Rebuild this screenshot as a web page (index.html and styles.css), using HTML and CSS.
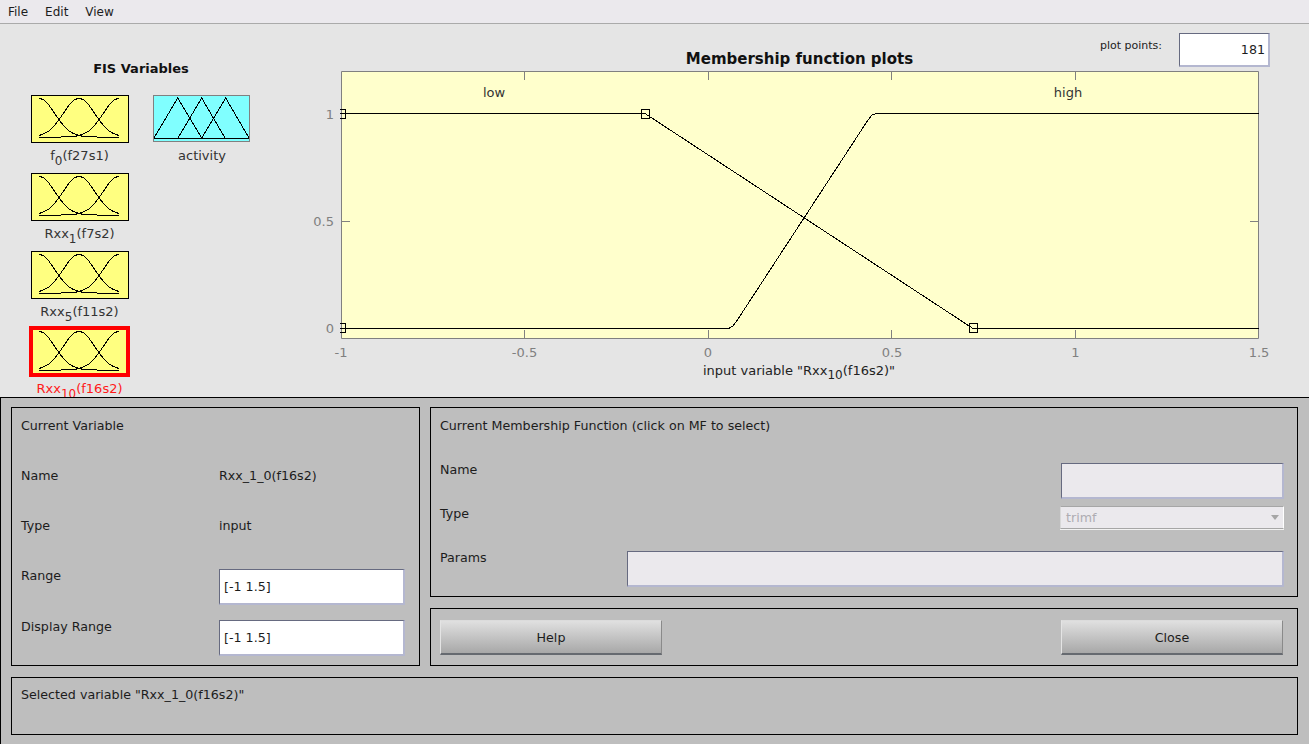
FILE: index.html
```html
<!DOCTYPE html>
<html lang="en">
<head>
    <meta charset="UTF-8">
    <meta name="viewport" content="width=device-width, initial-scale=1.0">
    <title>Membership Function Editor</title>
    <link rel="stylesheet" href="styles.css">
</head>
<body>
    <svg class="defs" width="0" height="0" aria-hidden="true">
        <symbol id="gauss3" viewBox="0 0 98 48" overflow="visible">
            <path d="M8 3L13 5L18 10.2L23 17.4L28 24.8L33 31.2L38 35.9L43 38.8L48 40.5L53 41.5H65L67 42.5H88"/>
            <path d="M8 40.5L13 38.8L18 35.9L23 31.2L28 24.8L33 17.4L38 10.2L43 5L48 3L53 5L58 10.2L63 17.4L68 24.8L73 31.2L78 35.9L83 38.8L88 40.5"/>
            <path d="M8 42.5H29L31 41.5H43L48 40.5L53 38.8L58 35.9L63 31.2L68 24.8L73 17.4L78 10.2L83 5L88 3"/>
        </symbol>
    </svg>

    <nav class="menubar">
        <span class="menu-item">File</span>
        <span class="menu-item">Edit</span>
        <span class="menu-item">View</span>
    </nav>

    <section class="top">
        <aside class="fis">
            <h2 class="fis-title">FIS Variables</h2>
            <div class="fis-grid">
                <div class="fis-var">
                    <svg class="thumb" viewBox="1 1 96 46"><use href="#gauss3" width="98" height="48"/></svg>
                    <span class="fis-label">f<sub>0</sub>(f27s1)</span>
                </div>
                <div class="fis-var">
                    <svg class="thumb thumb-output" viewBox="1 1 95 45">
                        <path d="M1 43L24.7 3L48.7 43M25 43L48.7 3L72 43M48.7 43L72.7 3L96 43M0 43H97"/>
                    </svg>
                    <span class="fis-label label-output">activity</span>
                </div>
                <div class="fis-var">
                    <svg class="thumb" viewBox="1 1 96 46"><use href="#gauss3" width="98" height="48"/></svg>
                    <span class="fis-label">Rxx<sub>1</sub>(f7s2)</span>
                </div>
                <div></div>
                <div class="fis-var">
                    <svg class="thumb" viewBox="1 1 96 46"><use href="#gauss3" width="98" height="48"/></svg>
                    <span class="fis-label">Rxx<sub>5</sub>(f11s2)</span>
                </div>
                <div></div>
                <div class="fis-var selected">
                    <svg class="thumb" viewBox="2 2 93 43"><use href="#gauss3" width="98" height="48"/></svg>
                    <span class="fis-label">Rxx<sub>10</sub>(f16s2)</span>
                </div>
            </div>
        </aside>

        <div class="plot-area">
            <header class="plot-head">
                <h1 class="plot-title">Membership function plots</h1>
                <div class="plot-points">
                    <label class="plot-points-label" for="points">plot points:</label>
                    <input class="field points-input" id="points" type="text" value="181">
                </div>
            </header>
            <svg class="plot" width="1009" height="325" viewBox="300 71 1009 325">
                <rect class="axes-bg" x="341.5" y="71.5" width="917" height="267"/>
                <path class="axes" d="M341.5 71.5H1258.5V338.5H341.5Z"/>
                <path class="axes" d="M524.5 72V80M708.5 72V80M891.5 72V80M1075.5 72V80M524.5 338V330M708.5 338V330M891.5 338V330M1075.5 338V330M342 113.5H350M342 221.5H350M342 328.5H350M1258 113.5H1250M1258 221.5H1250M1258 328.5H1250"/>

                <path class="curve" d="M340 113.5H645L973 328.5H1258.5"/>
                <path class="curve" d="M340 328.5H728.5L733 326L738 319L868 120L872 115L876 113.5H1258.5"/>
                <path class="curve" d="M340 109.5H345.5V118.5H340M340 323.5H345.5V332.5H340"/>
                <rect class="curve" x="641.5" y="109.5" width="8" height="9"/>
                <rect class="curve" x="969.5" y="323.5" width="8" height="9"/>

                <text class="mf-name" x="494" y="97">low</text>
                <text class="mf-name" x="1068" y="97">high</text>

                <text class="tick tick-y" x="334" y="119">1</text>
                <text class="tick tick-y" x="334" y="226">0.5</text>
                <text class="tick tick-y" x="334" y="333">0</text>
                <text class="tick" x="341" y="357">-1</text>
                <text class="tick" x="524.5" y="357">-0.5</text>
                <text class="tick" x="708" y="357">0</text>
                <text class="tick" x="892" y="357">0.5</text>
                <text class="tick" x="1075.5" y="357">1</text>
                <text class="tick" x="1259" y="357">1.5</text>
                <text class="x-label" x="799" y="375">input variable "Rxx<tspan class="x-sub" dy="4">10</tspan><tspan dy="-4">(f16s2)"</tspan></text>
            </svg>
        </div>
    </section>

    <section class="bottom">
        <div class="panel current-var">
            <div class="panel-title var-title">Current Variable</div>
            <div>Name</div>
            <div>Rxx_1_0(f16s2)</div>
            <div>Type</div>
            <div>input</div>
            <div>Range</div>
            <input class="field var-input" type="text" value="[-1 1.5]">
            <div>Display Range</div>
            <input class="field var-input" type="text" value="[-1 1.5]">
        </div>

        <div class="right-col">
            <div class="panel current-mf">
                <div class="panel-title mf-title">Current Membership Function (click on MF to select)</div>
                <div class="mf-row">
                    <span>Name</span>
                    <input class="field field-off mf-name-input" type="text">
                </div>
                <div class="mf-row">
                    <span>Type</span>
                    <div class="dropdown">trimf<span class="dropdown-arrow"></span></div>
                </div>
                <div class="mf-row">
                    <span>Params</span>
                    <input class="field field-off mf-params-input" type="text">
                </div>
            </div>
            <div class="panel button-bar">
                <button class="btn">Help</button>
                <button class="btn">Close</button>
            </div>
        </div>

        <div class="panel status">Selected variable "Rxx_1_0(f16s2)"</div>
    </section>
</body>
</html>
```

FILE: styles.css
```css
* {
    box-sizing: border-box;
}
html, body {
    margin: 0;
    height: 744px;
    overflow: hidden;
}
body {
    font-family: "DejaVu Sans", sans-serif;
    font-size: 12.67px;
    line-height: 16px;
    color: #1c1c1c;
    background-color: #e5e5e5;
}
.defs {
    position: absolute;
}

/* menu */
.menubar {
    display: flex;
    height: 24px;
    padding: 4px 0 0 8px;
    gap: 17px;
    font-size: 12px;
    background-color: #ebe9ed;
    border-bottom: 1px solid #aaa;
}

/* top half */
.top {
    display: flex;
    height: 373px;
    overflow: hidden;
}
.fis {
    width: 300px;
    padding: 36px 0 0 31px;
}
.fis-title {
    margin: 0 0 17px;
    width: 220px;
    font-size: 13px;
    line-height: 18px;
    text-align: center;
    color: #111;
}
.fis-grid {
    display: grid;
    grid-template-columns: 98px 98px;
    grid-auto-rows: 78px;
    column-gap: 24px;
}
.fis-var {
    display: flex;
    flex-direction: column;
    align-items: center;
    color: #333;
}
.fis-label {
    margin: 5px 0 0 -1px;
    font-size: 13px;
    white-space: nowrap;
}
.label-output {
    margin: 6px 0 0;
}
.fis-label sub {
    font-size: 12px;
    line-height: 0;
    vertical-align: -5px;
}
.thumb {
    display: block;
    flex: none;
    width: 98px;
    height: 48px;
    border: 1px solid #000;
    background-color: #ffff80;
}
.thumb path, .thumb use {
    fill: none;
    stroke: #000;
    stroke-width: 1;
    shape-rendering: crispEdges;
}
.thumb-output {
    align-self: flex-start;
    width: 97px;
    height: 47px;
    border-color: #808080;
    background-color: #80ffff;
}
.selected {
    color: #ff1a1a;
}
.selected .thumb {
    width: 101px;
    height: 51px;
    margin: -3px -1px 0 -2px;
    border: 4px solid #ff0000;
}
.selected .fis-label {
    margin-top: 4px;
}

/* plot */
.plot-area {
    flex: 1;
    display: flex;
    flex-direction: column;
}
.plot-head {
    display: flex;
    justify-content: center;
    height: 47px;
    margin: 0 50px 0 40px;
    position: relative;
}
.plot-title {
    margin: 26px 0 0;
    font-size: 15px;
    line-height: 18px;
    color: #111;
}
.plot-points {
    position: absolute;
    right: -11px;
    top: 9px;
    display: flex;
    gap: 17px;
}
.plot-points-label {
    margin-top: 5px;
    font-size: 11px;
    line-height: 16px;
    color: #222;
}
.points-input {
    width: 91px;
    height: 34px;
    padding-right: 1px;
    text-align: right;
}
.plot {
    display: block;
}
.axes-bg {
    fill: #ffffcc;
}
.axes {
    fill: none;
    stroke: #808080;
    stroke-width: 1;
}
.curve {
    fill: none;
    stroke: #000;
    stroke-width: 1;
    shape-rendering: crispEdges;
}
.plot text {
    font-family: "DejaVu Sans", sans-serif;
    font-size: 13px;
    text-anchor: middle;
}
.mf-name {
    fill: #333;
}
.plot .tick {
    fill: #808080;
}
.plot .tick-y {
    text-anchor: end;
}
.x-label {
    fill: #222;
}
.x-sub {
    font-size: 12px;
}

/* bottom half */
.bottom {
    display: grid;
    grid-template-columns: 409px 868px;
    grid-template-rows: 259px 58px;
    row-gap: 11px;
    column-gap: 10px;
    height: 347px;
    padding: 9px 0 0 10px;
    border-top: 1px solid #000;
    border-left: 1px solid #000;
    background-color: #bebebe;
}
.panel {
    border: 1px solid #000;
}
.current-var {
    display: grid;
    grid-template-columns: 198px 186px;
    grid-template-rows: 50px 50px 50px 51px auto;
    padding: 10px 0 0 9px;
}
.var-title {
    grid-column: 1 / 3;
}
.field {
    display: block;
    padding: 0 3px 0 4px;
    font-family: "DejaVu Sans", sans-serif;
    font-size: 12.67px;
    color: #1c1c1c;
    background-color: #fff;
    border: 2px solid;
    border-color: #666a80 #b4b7d0 #b4b7d0 #666a80;
    border-top-width: 1px;
    border-left-width: 1px;
    outline: none;
}
.var-input {
    width: 186px;
    height: 36px;
    margin-top: 1px;
}
.right-col {
    display: flex;
    flex-direction: column;
    gap: 11px;
}
.current-mf {
    height: 190px;
    padding: 10px 13px 0 9px;
}
.mf-title {
    height: 44px;
}
.mf-row {
    display: flex;
    justify-content: space-between;
    height: 44px;
}
.field-off {
    background-color: #ebe9ed;
}
.mf-name-input {
    width: 223px;
    height: 36px;
    margin-top: 1px;
}
.mf-params-input {
    width: 657px;
    height: 36px;
    margin-top: 1px;
}
.dropdown {
    display: flex;
    justify-content: space-between;
    align-items: center;
    width: 224px;
    height: 23px;
    padding: 0 4px 0 5px;
    color: #aeacb2;
    background-color: #ebe9ed;
    border-top: 1px solid #a6a6a6;
    border-left: 1px solid #d8d8d8;
    border-right: 1px solid #fff;
    border-bottom: 1px solid #a6a6a6;
    box-shadow: 0 1px 0 #f2f2f2;
}
.dropdown-arrow {
    width: 0;
    height: 0;
    border-left: 4px solid transparent;
    border-right: 4px solid transparent;
    border-top: 5px solid #a6a6a6;
}
.button-bar {
    display: flex;
    justify-content: space-between;
    height: 58px;
    padding: 11px 14px 0 9px;
}
.btn {
    width: 222px;
    height: 35px;
    padding: 0;
    font-family: "DejaVu Sans", sans-serif;
    font-size: 12.67px;
    color: #1c1c1c;
    background: linear-gradient(#e0e0e0, #a8a8a8);
    border: 1px solid;
    border-color: #dcdcdc #8a8a8a #666a70 #e4e4e4;
    border-bottom-width: 2px;
}
.status {
    grid-column: 1 / 3;
    height: 58px;
    padding: 9px;
}
```
